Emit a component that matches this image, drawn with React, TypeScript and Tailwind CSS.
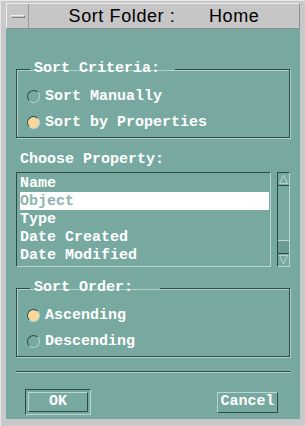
import React from "react";

const mono = { fontFamily: '"Liberation Mono", "DejaVu Sans Mono", monospace' };

function Radio({ on, label }: { on?: boolean; label: string }) {
  return (
    <div className="flex h-[26px] items-center pl-[10px]">
      <span
        className={`box-border h-[13px] w-[13px] rounded-full border border-t-[#2b4b46] border-l-[#2b4b46] border-b-[#b9d6d0] border-r-[#b9d6d0] ${
          on ? "bg-[#fad79e]" : "bg-transparent"
        }`}
      />
      <span className="ml-[5px] text-[15px] font-bold leading-none text-white">{label}</span>
    </div>
  );
}

function Group({ title, gap, children }: { title: string; gap: string; children: React.ReactNode }) {
  return (
    <fieldset className="border border-[#2b4b46] shadow-[inset_1px_1px_0_#b0d0ca,1px_1px_0_#b0d0ca]">
      <legend className={`ml-[13px] pl-[4px] text-[15px] font-bold leading-[16px] text-white ${gap}`}>{title}</legend>
      <div className="pb-[2px] pt-[6px]">{children}</div>
    </fieldset>
  );
}

export default function App() {
  const items = ["Name", "Object", "Type", "Date Created", "Date Modified"];
  return (
    <div className="flex h-[426px] w-[305px] flex-col border-l border-t border-[#e6e6e6] bg-[#c9c9c9] px-[5px] pb-[7px] pt-[2px]">
      {/* Title bar */}
      <div className="flex h-[26px] border border-b-[#8e8e8e] border-l-[#ececec] border-r-[#8e8e8e] border-t-[#ececec] bg-[#c6c6c6]">
        <div className="flex w-[22px] items-center justify-center border-r border-[#9a9a9a]">
          <span className="h-[3px] w-[14px] border border-b-[#7d7d7d] border-l-[#f0f0f0] border-r-[#7d7d7d] border-t-[#f0f0f0]" />
        </div>
        <div
          className="flex flex-1 items-center justify-center whitespace-pre text-[18px] tracking-[0.6px] text-black"
          style={{ fontFamily: '"Liberation Sans", Arial, sans-serif' }}
        >
          {"Sort Folder :      Home"}
        </div>
      </div>

      {/* Body */}
      <div className="flex flex-1 flex-col bg-[#77a9a0] px-[10px] pt-[32px]" style={mono}>
        <Group title="Sort Criteria:" gap="pr-[15px]">
          <Radio label="Sort Manually" />
          <Radio on label="Sort by Properties" />
        </Group>

        <div className="mt-[14px] pl-[4px] text-[15px] font-bold leading-[16px] text-white">Choose Property:</div>

        <div className="mt-[4px] flex items-start">
          <div className="box-border h-[95px] w-[255px] border border-b-[#b9d6d0] border-l-[#2b4b46] border-r-[#b9d6d0] border-t-[#2b4b46] pl-[3px] pr-[1px] pt-[1px]">
            {items.map((it) => (
              <div
                key={it}
                className={`flex h-[18px] items-center text-[15px] font-bold leading-none ${
                  it === "Object" ? "bg-white text-[#8fb4ad]" : "text-white"
                }`}
              >
                {it}
              </div>
            ))}
          </div>
          <div className="ml-[6px] box-border flex h-[95px] w-[13px] flex-col border border-b-[#b9d6d0] border-l-[#2b4b46] border-r-[#b9d6d0] border-t-[#2b4b46]">
            <svg width="11" height="12" viewBox="0 0 11 12" className="shrink-0">
              <path d="M1.5 10.5 L5.5 2 L9.5 10.5 Z" fill="none" stroke="#b9d6d0" strokeWidth="1" />
            </svg>
            <div className="flex-1 border-t border-[#2b4b46]" />
            <div className="h-[14px] border-y border-b-[#2b4b46] border-t-[#b9d6d0] bg-[#6c9b93]" />
            <svg width="11" height="12" viewBox="0 0 11 12" className="shrink-0">
              <path d="M1.5 1.5 L5.5 10 L9.5 1.5 Z" fill="none" stroke="#b9d6d0" strokeWidth="1" />
            </svg>
          </div>
        </div>

        <div className="mt-[13px]">
          <Group title="Sort Order:" gap="pr-[27px]">
            <Radio on label="Ascending" />
            <Radio label="Descending" />
          </Group>
        </div>

        <div className="mt-[14px] h-[2px] border-b border-t border-b-[#b0d0ca] border-t-[#2b4b46]" />

        <div className="mt-[16px] flex items-start justify-between pl-[9px] pr-[12px]">
          <div className="box-border h-[26px] w-[66px] border border-b-[#b9d6d0] border-l-[#2b4b46] border-r-[#b9d6d0] border-t-[#2b4b46] p-[2px]">
            <div className="flex h-full items-center justify-center border border-b-[#2b4b46] border-l-[#b9d6d0] border-r-[#2b4b46] border-t-[#b9d6d0] text-[15px] font-bold text-white">
              OK
            </div>
          </div>
          <div className="mt-[3px] box-border flex h-[21px] w-[61px] items-center justify-center border border-b-[#2b4b46] border-l-[#b9d6d0] border-r-[#2b4b46] border-t-[#b9d6d0] text-[15px] font-bold text-white">
            Cancel
          </div>
        </div>
      </div>
    </div>
  );
}
